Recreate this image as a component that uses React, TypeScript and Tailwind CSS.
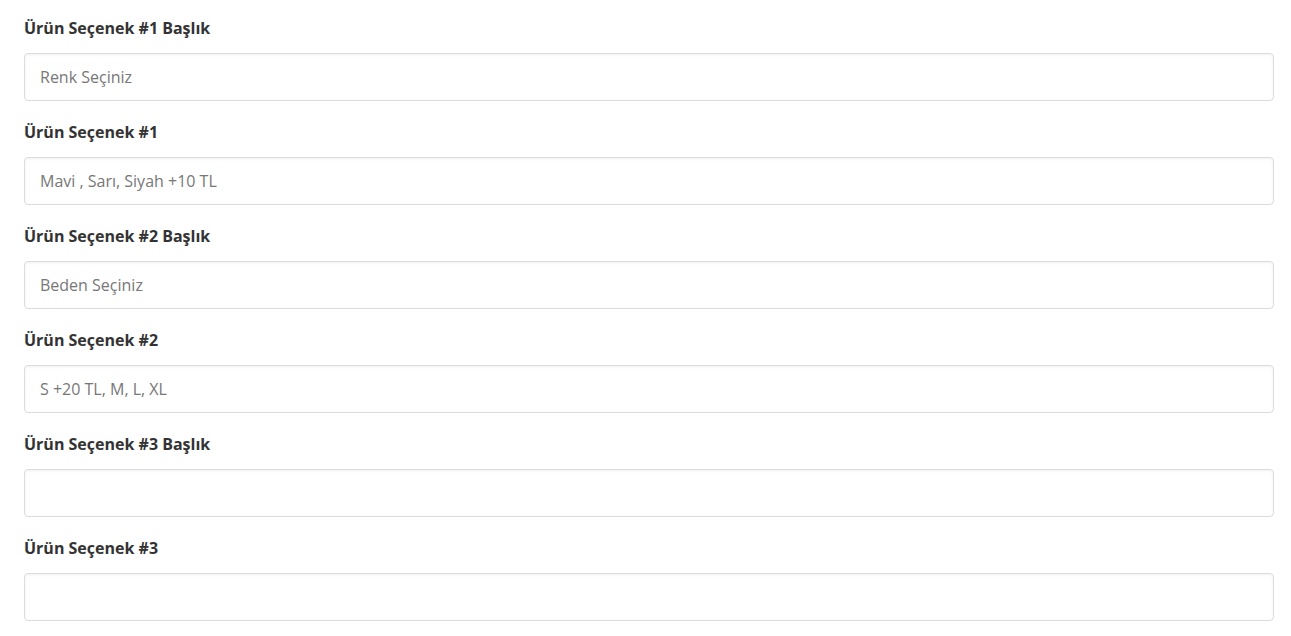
const FIELDS = [
  { label: 'Ürün Seçenek #1 Başlık', value: 'Renk Seçiniz' },
  { label: 'Ürün Seçenek #1', value: 'Mavi , Sarı, Siyah +10 TL' },
  { label: 'Ürün Seçenek #2 Başlık', value: 'Beden Seçiniz' },
  { label: 'Ürün Seçenek #2', value: 'S +20 TL, M, L, XL' },
  { label: 'Ürün Seçenek #3 Başlık', value: '' },
  { label: 'Ürün Seçenek #3', value: '' },
];

export default function App() {
  return (
    <div className="min-h-screen bg-white pl-[24px] pr-[17px] pt-[17px] font-['Open_Sans',sans-serif]">
      {FIELDS.map((f, i) => (
        <div key={i} className="mb-[20px] flex flex-col">
          <label className="h-[22px] text-[16px] leading-[22px] font-bold text-[#333]">{f.label}</label>
          <div className="mt-[14px] flex h-[48px] items-center rounded-[4px] border border-[#dcdcdc] bg-white px-[15px] text-[16px] text-[#777] shadow-[inset_0_1px_3px_rgba(0,0,0,0.06)]">
            {f.value}
          </div>
        </div>
      ))}
    </div>
  );
}
